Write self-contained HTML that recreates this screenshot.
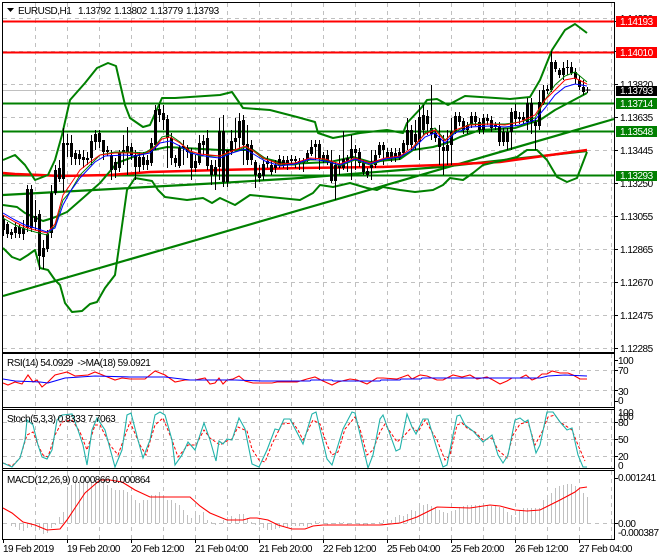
<!DOCTYPE html>
<html><head><meta charset="utf-8"><style>
html,body{margin:0;padding:0;background:#fff;width:660px;height:560px;overflow:hidden}
svg{display:block}
text{font-family:"Liberation Sans",sans-serif;font-size:10px;letter-spacing:-.5px;fill:#000}
.w{fill:#fff}
</style></head><body>
<svg width="660" height="560" viewBox="0 0 660 560" xmlns="http://www.w3.org/2000/svg">
<rect width="660" height="560" fill="#fff"/>
<!-- grid -->
<g stroke="#c0c0c0" stroke-width="1" stroke-dasharray="4 4" fill="none" shape-rendering="crispEdges">
<path d="M35.5 3V352M67.5 3V352M99.5 3V352M131.5 3V352M163.5 3V352M195.5 3V352M227.5 3V352M259.5 3V352M291.5 3V352M323.5 3V352M355.5 3V352M387.5 3V352M419.5 3V352M451.5 3V352M483.5 3V352M515.5 3V352M547.5 3V352M579.5 3V352M611.5 3V352"/>
<path d="M35.5 354V407M67.5 354V407M99.5 354V407M131.5 354V407M163.5 354V407M195.5 354V407M227.5 354V407M259.5 354V407M291.5 354V407M323.5 354V407M355.5 354V407M387.5 354V407M419.5 354V407M451.5 354V407M483.5 354V407M515.5 354V407M547.5 354V407M579.5 354V407M611.5 354V407"/>
<path d="M35.5 410V468M67.5 410V468M99.5 410V468M131.5 410V468M163.5 410V468M195.5 410V468M227.5 410V468M259.5 410V468M291.5 410V468M323.5 410V468M355.5 410V468M387.5 410V468M419.5 410V468M451.5 410V468M483.5 410V468M515.5 410V468M547.5 410V468M579.5 410V468M611.5 410V468"/>
<path d="M35.5 471V539M67.5 471V539M99.5 471V539M131.5 471V539M163.5 471V539M195.5 471V539M227.5 471V539M259.5 471V539M291.5 471V539M323.5 471V539M355.5 471V539M387.5 471V539M419.5 471V539M451.5 471V539M483.5 471V539M515.5 471V539M547.5 471V539M579.5 471V539M611.5 471V539"/>
<path d="M3 18.5H614M3 51.5H614M3 84.5H614M3 117.5H614M3 150.5H614M3 183.5H614M3 216.5H614M3 249.5H614M3 282.5H614M3 315.5H614M3 348.5H614"/>
<path d="M3 370.5H614M3 390.5H614M3 422.5H614M3 439.5H614M3 456.5H614M3 523.5H614"/>
</g>
<path d="M3 90.5H614" stroke="#c0c0c0" shape-rendering="crispEdges"/>

<!-- horizontal levels -->
<g fill="none" stroke-width="2" shape-rendering="crispEdges">
<path d="M3 21.5H614M3 52.5H614" stroke="#f00"/>
<path d="M3 103.5H614M3 131.5H614M3 175.5H614" stroke="#008000"/>
</g>
<!-- trend lines -->
<g fill="none" stroke="#008000" stroke-width="2.2">
<path d="M3 296L614 119"/>
<path d="M3 195L220 183L300 178L440 167L587 151"/>
</g>
<path d="M3 173L15 174L40 175L60 176L110 175L150 172L220 170L300 168L380 167L440 165L500 162L587 150" fill="none" stroke="#f00" stroke-width="2.5"/>

<!-- Bollinger -->
<g fill="none" stroke="#008000" stroke-width="2" stroke-linejoin="round">
<path d="M3 160L15 155L25 165L35 180L48 175L55 160L62 135L70 100L85 83L97 68L108 63L116 66L125 105L130 118L143 127L150 125L162 98L175 98L220 95L232 92L243 108L270 110L297 117L315 122L318 133L333 138L360 133L387 130L403 133L407 123L422 107L427 100L437 99L448 105L465 96L510 99L530 97L540 80L552 50L565 30L575 24L587 33"/>
<path d="M3 205L17 207L25 213L43 221L53 218L67 212L83 198L100 183L117 163L133 157L153 150L167 147L220 150L253 150L263 158L287 164L330 162L353 157L370 162L400 159L413 150L433 147L447 143L460 137L480 130L515 128L540 120L555 110L587 93"/>
<path d="M3 248L12 257L20 260L28 255L35 250L40 268L48 270L55 280L60 285L65 303L72 312L82 311L90 304L97 302L105 288L115 275L120 240L127 190L135 178L152 181L158 190L165 197L187 200L203 198L212 203L220 198L235 205L250 195L270 197L300 200L313 193L320 185L333 187L350 183L367 188L377 190L383 187L400 190L415 192L433 190L443 185L450 178L463 180L473 173L483 165L517 157L527 150L537 150L547 160L557 177L567 182L577 178L587 152"/>
</g>

<!-- candles -->
<g transform="translate(.5 0)" shape-rendering="crispEdges" fill="none">
<path stroke="#000" stroke-width="1" d="M3 215V236M7 222V238M11 229V239M15 222V238M19 224V238M23 220V240M27 185V232M31 185V232M35 200V230M39 210V270M43 240V269M47 230V252M51 185V238M55 165V195M59 160V182M63 128V192M67 134V157M71 135V165M75 150V165M79 150V165M83 150V168M87 152V165M91 135V165M95 130V150M99 130V148M103 140V160M107 146V156M111 150V180M115 158V178M119 150V172M123 135V165M127 127V175M131 143V160M135 150V180M139 152V172M143 152V170M147 155V170M151 138V166M155 105V150M159 104V122M163 105V130M167 115V168M171 133V165M175 155V167M179 145V168M183 140V165M187 145V158M191 148V180M195 155V172M199 135V165M203 135V155M207 130V170M211 160V185M215 160V190M219 118V180M223 115V187M227 150V187M231 130V155M235 118V150M239 113V150M243 115V165M247 125V165M251 140V165M255 160V188M259 165V182M263 160V180M267 156V168M271 160V175M275 160V173M279 155V168M283 156V168M287 156V170M291 155V165M295 156V168M299 158V170M303 158V172M307 150V162M311 140V156M315 140V160M319 140V170M323 152V163M327 150V165M331 150V183M335 162V200M339 155V175M343 131V170M347 155V172M351 135V180M355 145V170M359 148V167M363 160V175M367 168V178M371 150V180M375 150V168M379 142V158M383 142V165M387 148V160M391 148V162M395 148V162M399 148V160M403 140V155M407 118V150M411 125V150M415 120V150M419 105V160M423 105V135M427 110V135M431 85V140M435 128V142M439 125V165M443 135V175M447 130V165M451 118V165M455 112V134M459 112V126M463 118V134M467 122V134M471 112V128M475 112V126M479 118V134M483 114V134M487 114V125M491 116V132M495 122V130M499 122V146M503 128V146M507 128V150M511 108V150M515 104V125M519 112V124M523 112V124M527 98V130M531 98V134M535 118V150M539 90V130M543 85V105M547 85V94M551 51V92M555 60V72M559 68V78M563 62V80M567 60V75M571 62V75M575 68V84M579 75V90M583 80V95M587 87V93"/>
<path id="g" d="M11 232V235M15 227V233M23 228V234M27 189V228M35 216V222M43 248V257M47 234V249M51 193V233M55 170V193M63 143V179M67 143V145M75 153V159M91 141V158M95 134V142M107 150V152M123 150V153M127 146V152M139 157V167M147 160V165M151 143V163M155 110V145M179 148V166M183 146V148M195 161V168M199 143V163M203 141V145M215 167V175M219 131V167M227 150V182M231 141V152M235 138V142M239 121V138M259 173V178M263 164V176M275 165V168M279 159V165M291 159V161M307 153V160M311 147V154M323 155V160M335 165V181M343 159V168M347 158V161M351 149V158M375 155V165M379 145V155M387 152V158M391 152V158M399 152V158M403 143V153M407 130V145M415 134V142M419 117V142M443 147V151M447 145V151M451 132V145M455 116V132M467 125V130M471 116V125M483 118V130M495 125V127M503 132V142M507 132V142M511 112V132M523 117V120M527 103V122M539 102V126M543 90V103M547 89V91M551 62V90M563 68V75M567 67V68M571 67V73" stroke="#000" stroke-width="3"/>
<path id="r" d="M3 219V230M7 224V234M19 227V234M31 189V228M39 214V256M59 168V179M71 143V157M79 154V159M83 157V160M87 158V160M99 133V142M103 140V152M111 155V170M115 162V170M119 153V168M131 147V155M135 155V167M143 157V165M159 109V115M163 113V120M167 119V138M171 138V158M175 158V163M187 148V152M191 152V168M207 138V166M211 165V175M223 131V182M243 120V145M247 144V160M251 145V160M255 162V175M267 161V164M271 165V172M283 160V165M287 160V163M295 159V161M299 161V164M303 161V163M315 144V147M319 144V159M327 155V162M331 162V181M339 165V168M355 149V153M359 152V163M363 163V172M367 171V175M371 165V168M383 145V150M395 153V158M411 130V145M423 115V130M427 116V124M431 128V134M435 133V138M439 138V147M459 116V122M463 121V130M475 116V122M479 122V130M487 118V121M491 120V128M499 126V142M515 111V119M519 117V119M531 103V122M535 122V126M555 62V69M559 70V75M575 72V79M579 80V87M583 87V92" stroke="#000" stroke-width="3"/>
<use href="#g" style="stroke:#008000;stroke-width:1"/>
<use href="#r" style="stroke:#f00;stroke-width:1"/>
<path d="M585 90H590" stroke="#000"/>
</g>

<!-- thin MAs -->
<g fill="none" stroke-width="1">
<path stroke="#008000" d="M3 218L15 225L25 229L35 232L47 235L55 226L63 200L70 192L80 175L90 165L100 155L115 152L130 152L145 153L155 146L162 137L170 135L180 142L190 152L200 156L210 156L220 156L232 153L245 147L255 151L265 158L280 165L295 165L310 160L325 160L340 166L355 160L370 165L385 160L400 157L412 150L425 133L435 128L445 140L455 132L470 124L490 124L505 124L520 122L535 118L545 100L555 85L565 76L575 72L587 82"/>
<path stroke="#f00" d="M3 215L15 222L25 227L35 230L47 233L55 224L63 195L70 185L80 170L90 162L100 155L115 153L130 153L145 154L155 147L162 139L170 137L180 143L190 151L200 154L210 155L220 156L232 151L245 146L255 152L265 159L280 164L295 163L310 158L325 159L340 164L355 158L370 163L385 158L400 156L412 148L425 134L435 130L445 141L455 130L470 125L490 124L505 125L520 122L535 115L545 100L555 90L565 80L575 78L587 84"/>
<path stroke="#00f" d="M3 213L15 220L25 225L35 228L47 232L55 228L63 205L70 192L80 178L95 162L105 156L125 155L135 156L150 153L160 143L170 141L180 146L190 153L200 155L210 157L220 158L232 153L245 149L255 155L265 161L280 166L295 164L310 159L325 161L340 165L355 159L370 164L385 159L400 157L412 150L425 137L435 133L445 143L455 133L470 127L490 126L505 127L520 125L535 120L545 108L555 95L565 87L575 84L587 86"/>
</g>

<!-- RSI -->
<path fill="none" stroke="#f00" stroke-width="1.1" d="M3 383L8 385L15 382L22 384L28 375L33 382L37 380L42 387L48 382L55 375L63 373L67 372L75 376L88 375L95 372L105 376L115 380L122 378L130 379L145 379L155 371L165 375L175 382L185 380L195 380L205 378L210 384L215 383L219 378L223 384L227 380L233 379L239 376L245 381L253 383L263 383L272 383L277 382L297 382L307 379L315 377L323 381L332 385L338 382L350 379L357 380L367 384L377 378L383 378L397 379L408 375L412 379L420 375L427 376L437 380L443 380L453 375L462 377L470 375L477 379L487 377L493 380L500 384L507 381L512 378L520 378L526 375L532 380L537 378L542 374L547 374L552 371L560 373L568 373L573 375L580 379L587 379"/>
<path fill="none" stroke="#00f" stroke-width="1.1" d="M3 379L15 381L40 382L48 383L65 378L95 376L130 377L165 377L190 380L235 380L262 381L310 381L311 380L332 380L333 381L380 381L381 380L400 380L401 379L421 379L422 378L440 378L500 378L540 378L548 376L565 375L587 376"/>

<!-- Stoch -->
<path fill="none" stroke="#f00" stroke-dasharray="3 2" d="M3 463L12 466L20 458L27 435L33 432L38 445L43 455L48 457L55 435L62 422L72 420L80 432L87 450L95 425L100 425L110 445L118 455L130 422L140 445L146 455L155 425L163 418L172 440L178 457L188 445L196 445L204 430L210 438L220 445L227 441L232 439L238 427L247 431L252 449L259 460L265 462L272 444L282 424L293 423L298 430L303 440L313 420L320 424L327 445L332 455L338 452L345 429L355 417L360 429L367 455L373 450L380 432L385 424L397 442L403 437L412 427L418 432L425 420L437 440L445 460L450 455L457 425L462 423L467 428L475 432L483 440L492 438L498 450L507 458L513 435L520 424L528 422L535 445L542 432L548 417L555 415L560 422L572 430L578 445L585 461"/>
<path fill="none" stroke="#20b2aa" stroke-width="1.1" d="M3 463L12 467L20 458L25 440L27 420L33 425L38 445L42 457L47 459L52 450L57 420L62 415L72 414L78 430L83 445L87 465L92 430L97 418L105 430L115 467L122 450L127 415L131 413L138 440L143 458L150 440L155 415L160 412L165 415L172 440L175 465L182 455L188 442L195 450L204 423L210 440L216 461L219 441L223 444L227 439L232 440L239 418L245 429L252 464L259 467L267 450L275 429L279 430L284 419L290 419L303 444L312 414L316 412L327 459L332 465L343 429L352 412L355 413L368 468L373 455L380 419L383 415L396 451L400 449L407 414L412 427L416 434L423 419L428 419L437 449L443 467L447 465L452 440L457 416L460 415L465 425L473 431L483 442L492 435L498 455L503 463L508 455L515 420L520 418L525 422L528 420L536 453L540 445L547 412L553 412L560 422L567 430L572 428L578 455L583 467L587 467"/>

<!-- MACD histogram -->
<path fill="none" stroke="#c0c0c0" shape-rendering="crispEdges" transform="translate(.5 0)" d="M11 523V526M15 523V527M19 523V530M23 523V531M27 523V528M31 523V527M35 523V527M39 523V530M43 523V534M47 523V533M51 523V528M55 523V525M59 523V517M63 523V512M67 523V488M71 523V485M75 523V480M79 523V480M83 523V480M87 523V480M91 523V480M95 523V480M99 523V480M103 523V480M107 523V485M111 523V488M115 523V490M119 523V490M123 523V490M127 523V492M131 523V495M135 523V500M139 523V503M143 523V500M147 523V500M151 523V495M155 523V495M159 523V492M163 523V497M167 523V500M171 523V500M175 523V503M179 523V505M183 523V510M187 523V515M191 523V518M195 523V515M199 523V515M203 523V512M207 523V520M211 523V522M215 523V525M219 523V524M223 523V520M227 523V517M231 523V516M235 523V518M239 523V514M243 523V514M247 523V518M251 523V522M255 523V525M259 523V525M263 523V528M267 523V530M271 523V530M275 523V529M279 523V528M283 523V527M287 523V527M291 523V526M295 523V526M299 523V526M303 523V526M307 523V527M311 523V525M315 523V521M319 523V522M323 523V524M327 523V525M331 523V524M335 523V524M339 523V522M343 523V522M347 523V525M351 523V524M355 523V524M359 523V525M363 523V525M367 523V525M371 523V524M375 523V523M379 523V522M383 523V520M387 523V520M391 523V520M395 523V517M399 523V515M403 523V516M407 523V514M411 523V510M415 523V511M419 523V505M423 523V505M427 523V504M431 523V506M435 523V507M439 523V510M443 523V512M447 523V513M451 523V512M455 523V510M459 523V507M463 523V506M467 523V505M471 523V505M475 523V505M479 523V505M483 523V505M487 523V505M491 523V506M495 523V506M499 523V507M503 523V508M507 523V512M511 523V515M515 523V517M519 523V510M523 523V508M527 523V508M531 523V508M535 523V508M539 523V508M543 523V500M547 523V495M551 523V493M555 523V488M559 523V486M563 523V485M567 523V484M571 523V484M575 523V486M579 523V489M583 523V493M587 523V497"/>
<path fill="none" stroke="#f00" stroke-width="1.1" d="M3 508L12 513L23 522L35 525L47 530L60 529L67 520L75 508L85 493L100 480L110 480L122 482L135 490L150 497L190 497L200 506L210 513L227 520L243 520L250 518L257 518L268 520L278 525L292 529L305 529L313 526L323 525L350 525L380 525L400 523L417 517L427 512L437 507L470 508L490 505L500 506L515 510L527 511L540 510L550 505L560 500L575 492L580 488L587 487"/>

<!-- frames -->
<g stroke="#000" fill="none" shape-rendering="crispEdges">
<path d="M2.5 2V539.5M614.5 2V539.5M2 2.5H615"/>
<path d="M2 352.5H615M2 353.5H615M2 407.5H615M2 409.5H615M2 468.5H615M2 470.5H615M2 539.5H615"/>
<path d="M3.5 540V543M67.5 540V543M131.5 540V543M195.5 540V543M259.5 540V543M323.5 540V543M387.5 540V543M451.5 540V543M515.5 540V543M579.5 540V543"/>
<path d="M615 21.5H618M615 51.5H618M615 84.5H618M615 117.5H618M615 150.5H618M615 183.5H618M615 216.5H618M615 249.5H618M615 282.5H618M615 315.5H618M615 348.5H618M615 360.5H618M615 370.5H618M615 390.5H618M615 401.5H618M615 422.5H618M615 439.5H618M615 456.5H618M615 478.5H618M615 523.5H618"/>
</g>

<!-- header -->
<path d="M7 8H14L10.5 12Z" fill="#000"/>
<text x="18" y="14">EURUSD,H1</text>
<text x="78" y="14">1.13792</text><text x="114" y="14">1.13802</text><text x="150" y="14">1.13779</text><text x="186" y="14">1.13793</text>

<!-- axis labels -->
<text x="620" y="22">1.14230</text><text x="620" y="88">1.13820</text><text x="620" y="121">1.13635</text><text x="620" y="154">1.13445</text><text x="620" y="187">1.13250</text><text x="620" y="220">1.13055</text><text x="620" y="253">1.12865</text><text x="620" y="286">1.12670</text><text x="620" y="319">1.12475</text><text x="620" y="352">1.12285</text>

<!-- tags -->
<rect x="616" y="16" width="41" height="11" fill="#f00"/><text class="w" x="620" y="25">1.14193</text>
<rect x="616" y="47" width="41" height="11" fill="#f00"/><text class="w" x="620" y="56">1.14010</text>
<rect x="616" y="86" width="41" height="10" fill="#000"/><text class="w" x="620" y="94">1.13793</text>
<rect x="616" y="98" width="41" height="11" fill="#008000"/><text class="w" x="620" y="107">1.13714</text>
<rect x="616" y="126" width="41" height="11" fill="#008000"/><text class="w" x="620" y="135">1.13548</text>
<rect x="616" y="171" width="41" height="10" fill="#008000"/><text class="w" x="620" y="179">1.13293</text>

<!-- indicator labels -->
<text x="7" y="366" xml:space="preserve">RSI(14) 54.0929  -&gt;MA(18) 59.0921</text>
<text x="7" y="422">Stoch(5,3,3) 0.8333 7.7063</text>
<text x="7" y="483">MACD(12,26,9) 0.000866 0.000864</text>

<text x="618" y="364">100</text><text x="618" y="374">70</text><text x="618" y="395">30</text><text x="618" y="404">0</text>
<text x="618" y="416">100</text><text x="618" y="420">100</text><text x="618" y="426">80</text><text x="618" y="443">50</text><text x="618" y="460">20</text><text x="618" y="469">0</text>
<text x="618" y="481">0.001241</text><text x="618" y="527">0.00</text><text x="618" y="536">-0.000387</text>

<!-- date labels -->
<text x="3" y="552">19 Feb 2019</text><text x="67" y="552">19 Feb 20:00</text><text x="131" y="552">20 Feb 12:00</text><text x="195" y="552">21 Feb 04:00</text><text x="259" y="552">21 Feb 20:00</text><text x="323" y="552">22 Feb 12:00</text><text x="387" y="552">25 Feb 04:00</text><text x="451" y="552">25 Feb 20:00</text><text x="515" y="552">26 Feb 12:00</text><text x="579" y="552">27 Feb 04:00</text>
</svg>
</body></html>
